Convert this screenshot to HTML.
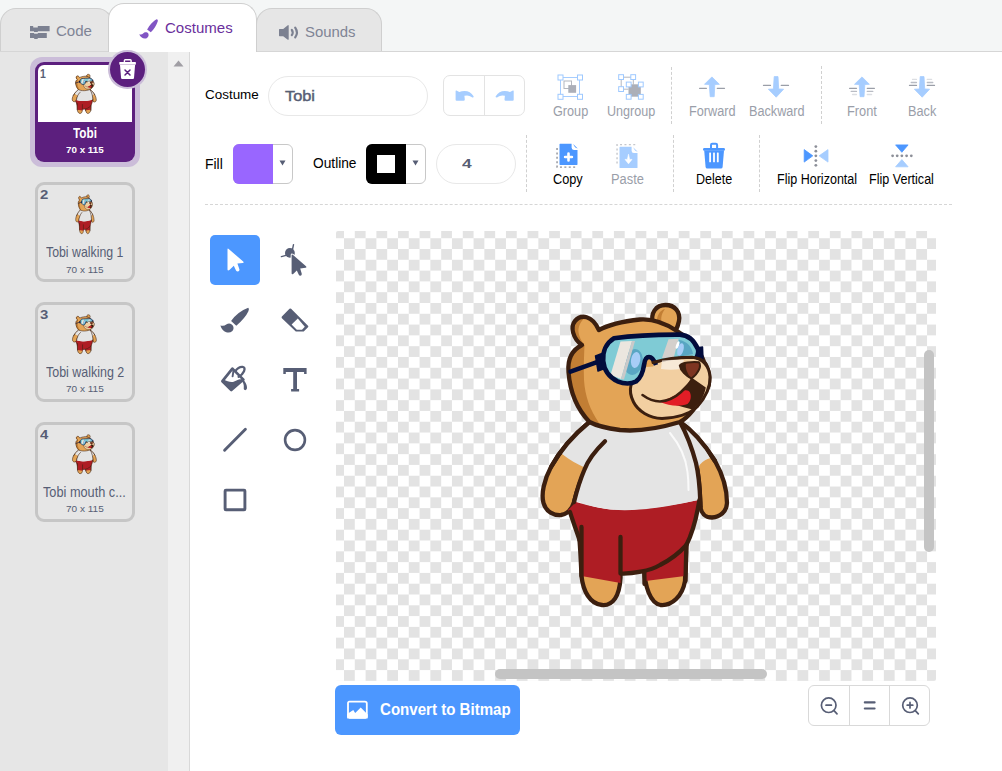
<!DOCTYPE html>
<html><head><meta charset="utf-8">
<style>
*{box-sizing:border-box;margin:0;padding:0}
html,body{width:1002px;height:771px;overflow:hidden;background:#fff;font-family:"Liberation Sans",sans-serif}
.a{position:absolute}
.t{position:absolute;white-space:pre;transform-origin:0 0}
.tab{position:absolute;background:#e6e6e6;border:1px solid #cfcfcf;border-bottom:none;border-radius:16px 16px 0 0}
.dv{position:absolute;width:1px;border-left:1px dashed #d0d0d0}
svg{position:absolute;overflow:visible}
</style></head><body>
<div class="a" style="left:0;top:0;width:1002px;height:52px;background:#f4f6f6"></div>
<!-- tabs -->
<div class="tab" style="left:0;top:8px;width:113px;height:44px"></div>
<div class="tab" style="left:256px;top:8px;width:126px;height:44px"></div>
<div class="a" style="left:0;top:51px;width:1002px;height:1px;background:#d6d6d6"></div>
<div class="tab" style="left:108px;top:3px;width:149px;height:49px;background:#fff"></div>

<div class="a" style="left:0;top:52px;width:168px;height:719px;background:#e6e6e6"></div>
<div class="a" style="left:168px;top:52px;width:21px;height:719px;background:#f0f0f0"></div>
<div class="a" style="left:189px;top:52px;width:1px;height:719px;background:#d9d9d9"></div>
<svg style="left:173px;top:60px" width="11" height="7"><path d="M0.5 6.5L5.5 0.5L10.5 6.5Z" fill="#a09ea4"/></svg>

<!-- costume cards -->
<div class="a" style="left:30px;top:57px;width:110px;height:110px;border-radius:12px;background:#cbbdd9"></div>
<div class="a" style="left:35px;top:62px;width:100px;height:100px;border-radius:9px;background:#5c1f7e"></div>
<div class="a" style="left:38px;top:65px;width:94px;height:57px;background:#fff;border-radius:6px 6px 0 0"></div>
<div class="a" style="left:108.4px;top:50.2px;width:38.4px;height:38.4px;border-radius:50%;background:#cbbdd9"></div>
<div class="a" style="left:110.1px;top:51.9px;width:35px;height:35px;border-radius:50%;background:#5c1f7e"></div>

<div class="a" style="left:35px;top:182px;width:100px;height:100px;border-radius:9px;border:3px solid #c6c6c6"></div>
<div class="a" style="left:35px;top:302px;width:100px;height:100px;border-radius:9px;border:3px solid #c6c6c6"></div>
<div class="a" style="left:35px;top:422px;width:100px;height:100px;border-radius:9px;border:3px solid #c6c6c6"></div>

<svg style="left:0;top:0" width="1002" height="771" viewBox="0 0 1002 771">
<use href="#bear" transform="translate(1.4 34.5) scale(0.1305)"/>
<use href="#bear" transform="translate(21.4 155.3) scale(0.1 0.1295)"/>
<use href="#bear" transform="translate(2.2 275.3) scale(0.1295)"/>
<use href="#bear" transform="translate(2.2 395.3) scale(0.1295)"/>
</svg>

<!-- toolbar row 1 -->
<div class="a" style="left:268px;top:76px;width:160px;height:40px;border:1px solid #e8e8e8;border-radius:20px"></div>
<div class="a" style="left:443px;top:75px;width:82px;height:41px;border:1px solid #e3e3e3;border-radius:7px"></div>
<div class="a" style="left:484px;top:76px;width:1px;height:39px;background:#e3e3e3"></div>
<div class="dv" style="left:671px;top:67px;height:57px"></div>
<div class="dv" style="left:821px;top:66px;height:58px"></div>

<!-- toolbar row 2 -->
<div class="a" style="left:233px;top:144px;width:60px;height:40px;border:1px solid #c8c8c8;border-radius:6px"></div><div class="a" style="left:233px;top:144px;width:40px;height:40px;border-radius:6px 0 0 6px;background:#9966ff"></div>
<svg style="left:279px;top:160px" width="7" height="6"><path d="M0.5 0.5H6.5L3.5 5.5Z" fill="#575e75"/></svg>
<div class="a" style="left:366px;top:144px;width:60px;height:40px;border:1px solid #c8c8c8;border-radius:6px"></div><div class="a" style="left:366px;top:144px;width:40px;height:40px;border-radius:6px 0 0 6px;background:#000"></div><div class="a" style="left:377px;top:155px;width:18px;height:18px;background:#fff"></div>
<svg style="left:412px;top:160px" width="7" height="6"><path d="M0.5 0.5H6.5L3.5 5.5Z" fill="#575e75"/></svg>
<div class="a" style="left:436px;top:144px;width:80px;height:40px;border:1px solid #e8e8e8;border-radius:20px"></div>
<div class="dv" style="left:526px;top:135px;height:57px"></div>
<div class="dv" style="left:673px;top:135px;height:57px"></div>
<div class="dv" style="left:759px;top:135px;height:57px"></div>

<div class="a" style="left:205px;top:204px;width:747px;height:1px;border-top:1px dashed #d6d6d6"></div>

<!-- tools -->
<div class="a" style="left:210px;top:235px;width:50px;height:50px;border-radius:5px;background:#4c97ff"></div>

<!-- canvas -->
<div class="a" style="left:336px;top:231px;width:600px;height:450px;border-radius:2px;overflow:hidden;background-color:#fff;background-image:conic-gradient(#fff 0 25%,#e3e3e3 0 50%,#fff 0 75%,#e3e3e3 0);background-size:21.6px 21.6px;background-position:-2.8px -3.6px"></div>
<svg style="left:0;top:0" width="1002" height="771" viewBox="0 0 1002 771">
<g id="bear">
<g stroke="#3c1f0f" stroke-width="4.3" stroke-linejoin="round" stroke-linecap="round">
<!-- right ear -->
<path d="M653 324C650 313 656 305 665.5 305C675 305 680.5 312 679 321C678 326 676.5 329 675.5 331Z" fill="#e3a456"/>
<!-- legs -->
<path d="M579.5 540C580.5 552 581 565 581.5 576C583 591 590 604 602 605C613 606 619.5 596 620.5 578L620.5 537Z" fill="#e3a456"/>
<path d="M644.3 570C645 586 650 603 660.5 605C672 606 682.5 596 685 581L686.4 544Z" fill="#e3a456"/>
<!-- arms -->
<path d="M589.5 422C576 433 561 449 551 467C544 480 541 494 543.5 503C546 512 554 515.5 561 515C568 514 572 509 574 502C577 490 580 480 586 469C592 458 598 449 605 441.3Z" fill="#e3a456"/>
<path d="M680 422C692 430 705 445 715 461C723 475 727 490 727 503C726.5 512 720 517 712 517.5C705 517.5 701 513 700.5 507C700 495 700 480 696 463C692 448 686 433 680 422Z" fill="#e3a456"/>
</g>
<!-- shorts -->
<path d="M568 510C572 525 577 533 579.5 540L581.5 576L620.5 583L620.5 573.5C632 574 650 571 660 566L644.5 573L645.5 581L685 576L686.4 545C694 533 698 515 699.4 499.7C670 506 640 510 620 510C605 510 590 506 576 502Z" fill="#ae1d24"/>
<!-- shirt -->
<path d="M589.5 422C576 433 566 444 562 454C570 460 577 464 583.5 467C590 457 597 448 605 441.3C596 452 588 461 584.3 470C580 480 577 490 575.5 501C590 506 605 510 624.8 510.3C650 510 675 505 699.4 499.7C700 490 700 478 699 470C698 466 700.5 464 700.5 464C703 461 707 459 710 458.3C705 447 694 433 680 422C660 428 640 432 620 430C605 428 595 425 589.5 422Z" fill="#e4e4e4"/>
<path d="M670 433C680 445 686 458 687.5 472C688.5 480 688.5 487 688.5 490" fill="none" stroke="#fafafa" stroke-width="2" stroke-linecap="round"/>
<g fill="none" stroke="#3c1f0f" stroke-width="4.3" stroke-linejoin="round" stroke-linecap="round">
<path d="M589.5 422C576 433 561 449 551 467"/>
<path d="M605 441.3C596 450 588 460 584.3 470C580 480 577 490 574 502"/>
<path d="M680 422C692 430 705 445 715 461"/>
<path d="M680 422C686 433 692 448 696 463C700 480 700 495 700.5 507"/>
<!-- hip/shorts outline -->
<path d="M570 512C573 522 577 532 579.5 540"/>
<path d="M581.5 527L581.5 576"/>
<path d="M620.5 537L620.5 573.5C632 574 650 571 660 565C672 559 681 551 686.4 545C693 532 697 515 699.4 500"/>
<path d="M686.4 545L685.5 581"/>
<path d="M644.3 572L644.5 584"/>
</g>
<!-- head -->
<path d="M589.5 422C578 410 570 392 568.5 372C567.5 360 572 350 582 345C573 339 570 327 575 321C581 314 592 315 598.9 330C608 325 622 321.5 640 319.5C655 318.5 668 325 677 331C690 339 700 350 704 362C711 372 711 385 705 392C698 405 688 418 680 422C660 428 640 432 620 430C605 428 595 425 589.5 422Z" fill="#e3a456"/>
<path d="M585 318C580.5 321 578 327 578.5 332C579 337 581.5 341 584.5 345C584 357 583.5 368 584 380C585 396 590 410 599 423L589.5 422C578 410 570 395 568.5 375C568.5 362 573 352 582 345C578 343 574 338 573 331C572 323 578 317 585 318Z" fill="#c27e34"/>
<path d="M657 324C656 316 660 310 665 309C661 314 660 320 663 326Z" fill="#c27e34"/>
<path d="M589.5 422C578 410 570 392 568.5 372C567.5 360 572 350 582 345C573 339 570 327 575 321C581 314 592 315 598.9 330C608 325 622 321.5 640 319.5C655 318.5 668 325 677 331C690 339 700 350 704 362C711 372 711 385 705 392C698 405 688 418 680 422C660 428 640 432 620 430C605 428 595 425 589.5 422Z" fill="none" stroke="#3c1f0f" stroke-width="4.3" stroke-linejoin="round"/>
<!-- goggle strap -->
<path d="M570.5 371.6L597 362.2" stroke="#020c3c" stroke-width="4.6" stroke-linecap="round"/>
<path d="M595.5 356L602 353.5L604.5 368.5L598 371Z" fill="#020c3c" stroke="#020c3c" stroke-width="1.5" stroke-linejoin="round"/>
<path d="M696.5 348L702.5 347L703 359.5L697 360Z" fill="#020c3c" stroke="#020c3c" stroke-width="1.5" stroke-linejoin="round"/>
<!-- muzzle -->
<path d="M646.3 364.5C660 360 676 357.3 692 357.3C702 358 709.5 366 710 377C710.5 388 705 398 697 407C688 415 676 418 662 418.5C649 418 638 411 633.5 402C630 395 630 389 631 385C635 377 640 370 646.3 364.5Z" fill="#f2cfa1" stroke="#3c1f0f" stroke-width="3" stroke-linejoin="round"/>
<!-- mouth -->
<path d="M691.5 377.5L705.8 387.5C704 397 699 405 692.5 409.5C686 408 680 406 672 404L664 401.5C672 398 678 394 682 390C686 386 689 382 691.5 377.5Z" fill="#3c1f0f"/>
<path d="M659.5 401.8C666 399.5 674 396.5 681 392C685 389.5 688.5 390 690 392.5C691.5 396 691 401 687.5 404C680 406.8 670 406.3 659.5 401.8Z" fill="#e21d26"/>
<path d="M642.5 395C648 399 654 401.5 660 401.5C668 401 675 397.5 681 392C685 388 688 385 690 383" fill="none" stroke="#3c1f0f" stroke-width="2.6" stroke-linecap="round"/>
<!-- goggle frame -->
<path d="M614 338.2C630 336 660 334.5 679.8 334.6C688 335 694 340 697.8 349C699 354 697 357 692 357.3C680 357.3 668 359 656 362C654 358 652 357 649 357C645.5 357 644.5 361 644 365C643 372 641 378 636 381.5C631 384 624 384 617.5 381.3C609 377 604 370 603.2 361C602.5 352 606 343 614 338.2Z" fill="#7fcbd5"/>
<path d="M649 360C651 360 652.5 362.5 653.5 366.5L646 367C646 362.5 647 360 649 360Z" fill="#e3a456"/>
<ellipse cx="633.5" cy="362" rx="9.3" ry="13" transform="rotate(12 633.5 362)" fill="#59a6c3"/>
<ellipse cx="635.6" cy="360" rx="4.6" ry="8" transform="rotate(10 635.6 360)" fill="#a7cdf7"/>
<path d="M620.5 341.5L632 341L621 379L610.5 375Z" fill="#ebe6df"/>
<path d="M632 341L635 341L624 379.5L621 379Z" fill="#c9c9c9"/>
<path d="M679 340C687 341 692 347 693 354L678 357Z" fill="#59a6c3"/>
<path d="M668.5 339.2L678.6 338.8L673.8 357.5L662 358Z" fill="#d4d0cc"/>
<ellipse cx="680.5" cy="349.5" rx="3" ry="6.5" transform="rotate(15 680.5 349.5)" fill="#a7cdf7"/>
<ellipse cx="677.6" cy="345" rx="1.4" ry="4" transform="rotate(20 677.6 345)" fill="#fff"/>
<path d="M696 359C698 355 699 352 697.8 349C694 340 688 335 679.8 334.6C660 334.5 630 336 614 338.2C606 343 602.5 352 603.2 361C604 370 609 377 617.5 381.3C624 384 631 384 636 381.5C641 378 643 372 644 365C644.5 361 645.5 357 649 357C652 357 654 360 656 365" fill="none" stroke="#020c3c" stroke-width="4.6" stroke-linejoin="round"/>
<!-- muzzle top edge over goggles -->
<path d="M653 362.5C663 359.5 677 357.3 692 357.3C698 357.6 703 360 706 364" fill="none" stroke="#3c1f0f" stroke-width="3" stroke-linecap="round"/>
<path d="M662 360.5C670 359.5 678 359.5 684 360L681 369C674 370 667 370 661 369Z" fill="#f8f1ea" opacity="0.75"/>
<!-- nose -->
<path d="M679.8 365.5C682 362.5 692 361.5 699 362.2C701.5 366 699 373 691.5 378.5C686 376 680.5 370.5 679.8 365.5Z" fill="#7e3521" stroke="#3c1f0f" stroke-width="2" stroke-linejoin="round"/>
<path d="M680.5 365C680.5 371 685 376 691.5 379C687 373 685 368 686 363Z" fill="#3c1f0f"/>
</g>
</svg>

<div class="a" style="left:924px;top:350px;width:10px;height:202px;border-radius:5px;background:#c4c4c4"></div>
<div class="a" style="left:495px;top:669px;width:272px;height:10px;border-radius:5px;background:#c4c4c4"></div>

<!-- bottom buttons -->
<div class="a" style="left:335px;top:685px;width:185px;height:50px;border-radius:6px;background:#4c97ff"></div>
<div class="a" style="left:808px;top:685px;width:122px;height:41px;border:1px solid #d9d9d9;border-radius:6px"></div>
<div class="a" style="left:849px;top:686px;width:1px;height:39px;background:#d9d9d9"></div>
<div class="a" style="left:889px;top:686px;width:1px;height:39px;background:#d9d9d9"></div>

<!-- tab icons -->
<svg style="left:26px;top:20px" width="28" height="24"><g fill="#7c8191">
<path d="M4 6.1H7.2V7.5H11.8V6.1H23.6V11.2H11.8V12.1H8V11.2H4Z"/>
<path d="M4 13.1H8.1V13.8H11.8V13.1H20.8V17.9H11.7V19H8.2V17.9H4Z"/>
</g></svg>
<svg style="left:135px;top:15px" width="28" height="28"><g fill="#8155c4">
<path d="M21.6 4.2C22.8 4.3 23.1 5.3 22.7 6.6C21.6 10.2 18.8 14.7 15.8 17.2L12.1 14.6C14.2 10.7 18.3 5.6 21.6 4.2Z"/>
<path d="M4.2 19.3C5.6 19.8 7.2 19.6 8.1 18.5C9.4 16.7 12.3 16.6 13.3 18.6C14.2 20.4 13.3 22.8 11.2 23.4C8.4 24.2 5.3 22.4 4.2 19.3Z"/>
</g></svg>
<svg style="left:275px;top:20px" width="28" height="24"><g fill="#7c8191">
<path d="M4 9.6Q4 9 4.6 9H8.2L12.8 5.2Q13.7 4.8 13.7 6V19Q13.7 20.2 12.8 19.7L8.2 16.2H4.6Q4 16.2 4 15.6Z"/>
</g><g fill="none" stroke="#7c8191" stroke-width="2.2" stroke-linecap="round">
<path d="M16.8 9.9Q18.6 12.5 16.8 15.2"/>
<path d="M20.2 7.6Q23.6 12.5 20.2 17.4"/>
</g></svg>

<!-- card delete trash -->
<svg style="left:106px;top:48px" width="44" height="44">
<rect x="13.3" y="14" width="16.6" height="2.7" rx="0.6" fill="#fff"/>
<path d="M18.4 14.2V12.6Q18.4 11.8 19.2 11.8H24.3Q25.1 11.8 25.1 12.6V14.2" fill="none" stroke="#fff" stroke-width="1.4"/>
<path d="M14 17.1H29.1L28 30.1Q27.9 31.1 26.9 31.1H16.1Q15.2 31.1 15.1 30.1Z" fill="#fff"/>
<path d="M19 22L24 27M24 22L19 27" stroke="#5c1f7e" stroke-width="1.5" stroke-linecap="round"/>
</svg>

<!-- undo / redo -->
<svg style="left:450px;top:82px" width="30" height="26"><path fill="#a6cdff" d="M5.6 9Q5.6 8.2 6.4 8.5L9.3 10Q11.6 9.1 14.6 9.1Q20.3 9.1 23.6 14.3Q24 15.6 22.6 15.6Q22.1 15.6 21.6 15Q18.6 12.6 14.4 13.8L14.8 17.5Q14.8 18.7 13.6 18.7H6.6Q5.6 18.7 5.6 17.7Z"/></svg>
<svg style="left:489px;top:82px" width="30" height="26"><path transform="translate(30.3 0) scale(-1 1)" fill="#a6cdff" d="M5.6 9Q5.6 8.2 6.4 8.5L9.3 10Q11.6 9.1 14.6 9.1Q20.3 9.1 23.6 14.3Q24 15.6 22.6 15.6Q22.1 15.6 21.6 15Q18.6 12.6 14.4 13.8L14.8 17.5Q14.8 18.7 13.6 18.7H6.6Q5.6 18.7 5.6 17.7Z"/></svg>

<!-- group -->
<svg style="left:557px;top:74px" width="26" height="26">
<rect x="3.5" y="3.5" width="19" height="19" fill="none" stroke="#a6cdff" stroke-width="1"/>
<rect x="7" y="7" width="7.5" height="7.5" fill="none" stroke="#b4b7bf" stroke-width="1"/>
<rect x="11.3" y="11.1" width="7.8" height="7.7" fill="#acafb8"/>
<g fill="#fff" stroke="#9ec9ff" stroke-width="1">
<rect x="1" y="1" width="5" height="5"/><rect x="20.5" y="1" width="5" height="5"/>
<rect x="1" y="20.3" width="5" height="5"/><rect x="20.5" y="20.3" width="5" height="5"/>
</g></svg>
<!-- ungroup -->
<svg style="left:612px;top:70px" width="34" height="32">
<path d="M9.2 7.2H21.3V14.5M9.2 7.2V19.2H16.5" fill="none" stroke="#b4b7bf" stroke-width="1"/>
<rect x="16.5" y="14.3" width="12.3" height="12.4" fill="#acafb8"/>
<g fill="#fff" stroke="#9ec9ff" stroke-width="1">
<rect x="6.7" y="4.7" width="4.8" height="4.8"/><rect x="18.8" y="4.7" width="4.8" height="4.8"/>
<rect x="6.7" y="16.7" width="4.8" height="4.8"/>
<rect x="14.3" y="12.1" width="4.8" height="4.8"/><rect x="26.4" y="12.1" width="4.8" height="4.8"/>
<rect x="14.3" y="24.4" width="4.8" height="4.8"/><rect x="26.4" y="24.4" width="4.8" height="4.8"/>
</g></svg>
<!-- forward -->
<svg style="left:695px;top:72px" width="35" height="28">
<path d="M16.9 4.9L24.4 12.3L19.8 12.5L19.2 24.7L15.2 24.7L14.3 12.5L9.5 12.3Z" fill="#a6cdff" stroke="#a6cdff" stroke-width="0.8" stroke-linejoin="round"/>
<path d="M4.6 16.3H11.4M22.3 16.3H29.5" stroke="#9a9ea8" stroke-width="1.3" stroke-linecap="round"/>
</svg>
<!-- backward -->
<svg style="left:758px;top:72px" width="35" height="28">
<path d="M16.2 4.6L20 4.6L20.7 17L25.6 17.2L18.2 25.2L10.4 17.2L15.4 17Z" fill="#a6cdff" stroke="#a6cdff" stroke-width="0.8" stroke-linejoin="round"/>
<path d="M5.5 13.4H12.5M23.3 13.4H30.5" stroke="#9a9ea8" stroke-width="1.3" stroke-linecap="round"/>
</svg>
<!-- front -->
<svg style="left:844px;top:72px" width="35" height="28">
<path d="M18 4.9L25.4 12.3L20.8 12.5L20 24.7L16.1 24.7L15.2 12.5L10.5 12.3Z" fill="#a6cdff" stroke="#a6cdff" stroke-width="0.8" stroke-linejoin="round"/>
<path d="M5.6 16.3H12.5M23.3 16.3H30.4" stroke="#9a9ea8" stroke-width="1.3" stroke-linecap="round"/>
<path d="M7.2 19.4H12.5M23.3 19.4H28.8" stroke="#b9bcc4" stroke-width="1.3" stroke-linecap="round"/>
<path d="M8.5 22.5H12.5M23.3 22.5H27.6" stroke="#dcdee2" stroke-width="1.3" stroke-linecap="round"/>
</svg>
<!-- back -->
<svg style="left:904px;top:72px" width="35" height="28">
<path d="M16.2 4.6L20 4.6L20.7 17L25.6 17.2L18.2 25.2L10.4 17.2L15.4 17Z" fill="#a6cdff" stroke="#a6cdff" stroke-width="0.8" stroke-linejoin="round"/>
<path d="M5.5 13.4H12.5M23.3 13.4H30.5" stroke="#9a9ea8" stroke-width="1.3" stroke-linecap="round"/>
<path d="M7.2 10.5H12.5M23.3 10.5H28.8" stroke="#b9bcc4" stroke-width="1.3" stroke-linecap="round"/>
<path d="M8.5 7.4H12.5M23.3 7.4H27.6" stroke="#dcdee2" stroke-width="1.3" stroke-linecap="round"/>
</svg>

<!-- copy -->
<svg style="left:550px;top:138px" width="35" height="34">
<path d="M9.5 6.3Q9.5 5.7 10.1 5.7H21.6V9.6Q21.6 11.9 23.9 11.9H27.5V26.3Q27.5 26.9 26.9 26.9H10.1Q9.5 26.9 9.5 26.3Z" fill="#4c97ff"/>
<path d="M23.2 6.1L27.7 10.6Q24.8 10.2 23.2 6.1Z" fill="#4c97ff"/>
<path d="M18.5 15.6V22.4M15.1 19H21.9" stroke="#fff" stroke-width="2.6" stroke-linecap="round"/>
<path d="M7.05 10V29.1H26.4" fill="none" stroke="#8d9098" stroke-width="1.4" stroke-dasharray="2 2.4"/>
</svg>
<!-- paste -->
<svg style="left:610px;top:138px" width="35" height="34">
<path d="M9.5 9.4Q9.5 8.8 10.1 8.8H21.6V12.7Q21.6 15 23.9 15H27.5V29.4Q27.5 30 26.9 30H10.1Q9.5 30 9.5 29.4Z" fill="#a6cdff"/>
<path d="M23.2 9.2L27.7 13.7Q24.8 13.3 23.2 9.2Z" fill="#a6cdff"/>
<path d="M18.5 16.2L19.6 21.4H22L18.5 25.8L15 21.4H17.4Z" fill="#fff" stroke="#fff" stroke-width="0.6" stroke-linejoin="round"/>
<path d="M7.05 25.6V6.6H26.4" fill="none" stroke="#c5c7cc" stroke-width="1.4" stroke-dasharray="2 2.4"/>
</svg>
<!-- delete -->
<svg style="left:696px;top:138px" width="35" height="34">
<path d="M15 10.5V7Q15 5.7 16.3 5.7H19.8Q21.1 5.7 21.1 7V10.5" fill="none" stroke="#4c97ff" stroke-width="2"/>
<rect x="7.05" y="9.9" width="21.9" height="2.9" rx="1.2" fill="#4c97ff"/>
<path d="M8.2 12.5H28L26.6 28.9Q26.4 30.4 24.9 30.4H11.3Q9.8 30.4 9.6 28.9Z" fill="#4c97ff"/>
<g fill="#fff"><rect x="13.2" y="14.5" width="1.8" height="9.7" rx="0.5"/><rect x="17.1" y="14.5" width="1.8" height="9.7" rx="0.5"/><rect x="20.9" y="14.5" width="1.8" height="9.7" rx="0.5"/></g>
</svg>
<!-- flip h -->
<svg style="left:798px;top:138px" width="35" height="34">
<path d="M6.2 11.6L14.8 17.85L6.2 24.1Z" fill="#4c97ff" stroke="#4c97ff" stroke-width="0.8" stroke-linejoin="round"/>
<path d="M30 11.6L21.1 17.85L30 24.1Z" fill="#a6cdff" stroke="#a6cdff" stroke-width="0.8" stroke-linejoin="round"/>
<g fill="#8c8f98"><circle cx="17.85" cy="8.6" r="1.4"/><circle cx="17.85" cy="13.2" r="1.4"/><circle cx="17.85" cy="17.85" r="1.4"/><circle cx="17.85" cy="22.6" r="1.4"/><circle cx="17.85" cy="27.3" r="1.4"/></g>
</svg>
<!-- flip v -->
<svg style="left:884px;top:138px" width="35" height="34">
<path d="M11.6 6.9L24.1 6.9L17.85 14.3Z" fill="#4c97ff" stroke="#4c97ff" stroke-width="0.8" stroke-linejoin="round"/>
<path d="M17.85 21.6L24.1 28.8L11.6 28.8Z" fill="#a6cdff" stroke="#a6cdff" stroke-width="0.8" stroke-linejoin="round"/>
<g fill="#8c8f98"><circle cx="8.6" cy="17.85" r="1.4"/><circle cx="13.2" cy="17.85" r="1.4"/><circle cx="17.85" cy="17.85" r="1.4"/><circle cx="22.6" cy="17.85" r="1.4"/><circle cx="27.3" cy="17.85" r="1.4"/></g>
</svg>

<!-- tools -->
<svg style="left:215px;top:240px" width="40" height="40"><path fill="#fff" d="M12.5 9.4Q12.5 7.9 13.7 8.9L28.2 21.6Q29.3 22.8 27.8 23L22.4 23.6L24.4 29.2Q24.8 31.3 22.8 31.5Q21.6 31.5 21 30.4L18.8 25.8L14.4 30Q12.6 31.2 12.5 29.4Z"/></svg>
<svg style="left:275px;top:240px" width="40" height="40">
<path d="M6.4 16.6L11 15.3M17.6 9L18.5 4.6" stroke="#575e75" stroke-width="1.4" stroke-linecap="round"/>
<circle cx="14.9" cy="12.9" r="4.9" fill="#575e75"/>
<path d="M16.6 15.2Q16.6 13.8 17.8 14.8L31 26.3Q32 27.5 30.6 27.7L25.2 28.4L26.7 33.6Q27 35.5 25.4 35.7Q24.3 35.8 23.8 34.8L21.8 30.5L18.2 34Q16.6 35 16.6 33.3Z" fill="#575e75" stroke="#fff" stroke-width="1.8" paint-order="stroke" stroke-linejoin="round"/>
</svg>

<svg style="left:215px;top:300px" width="40" height="40"><g fill="#575e75">
<path d="M33.2 7.8Q34.6 8.6 33.4 11.2Q30.4 17.8 21.3 25.7L16.1 20.9Q23 11.6 33.2 7.8Z"/>
<path d="M5.4 25.4Q8.8 26.6 11.2 24.6Q14.8 21.9 17.8 25.4Q19.6 28.6 17.1 31.3Q14.8 33.2 11.2 32.2Q6.9 30.6 5.4 25.4Z"/>
</g></svg>
<svg style="left:275px;top:300px" width="40" height="40">
<path d="M6.9 16.6L14.5 8.8Q15.3 8 16.1 8.8L33 25.7Q33.8 26.5 33 27.3L28.7 31.6H20.8L6.9 18.2Q6.2 17.4 6.9 16.6Z" fill="#575e75"/>
<path d="M22.8 18.4L16.6 24.6L21.8 29.8H27L29.8 26.8Z" fill="#fff"/>
</svg>

<svg style="left:215px;top:360px" width="40" height="40">
<path d="M17.4 8.6L28.4 19.6L16.3 30.1L7.4 21.2Z" fill="none" stroke="#575e75" stroke-width="2.7" stroke-linejoin="round"/>
<path d="M8.6 19.6C12 21.3 15 22.4 18 21.9C20.5 21.3 22.5 20 24.8 19.3L28.6 19.6L16.3 30.4L7 21.2Z" fill="#575e75"/>
<path d="M27 18.5C30 21 32.2 25 32 28C31.8 29.6 30.8 30.3 29.9 30.1C28.9 29.8 28.6 28.8 28.8 27.4C29 24.6 28 22.2 26.4 20.6Z" fill="#575e75"/>
<path d="M20.4 11C22 8.6 25 6.6 27.6 6.8C29.6 7 30 8.8 29 11.2C28 13.5 26 15.6 23.6 16.8" fill="none" stroke="#575e75" stroke-width="2.3" stroke-linecap="round"/>
<path d="M18.4 11.4L17.6 16.4" stroke="#575e75" stroke-width="1.9" stroke-linecap="round"/>
</svg>
<svg style="left:275px;top:360px" width="40" height="40"><path fill="#575e75" d="M8.3 8H31.6V14H29.1V11.9H22V29H24.1V31.6H16.1V29H18.2V11.9H10.8V14H8.3Z"/></svg>

<svg style="left:215px;top:420px" width="40" height="40"><path d="M9.6 30.2L30.4 9.3" stroke="#575e75" stroke-width="2.9" stroke-linecap="round"/></svg>
<svg style="left:275px;top:420px" width="40" height="40"><circle cx="20" cy="20" r="9.9" fill="none" stroke="#575e75" stroke-width="2.6"/></svg>
<svg style="left:215px;top:480px" width="40" height="40"><rect x="10.1" y="10.1" width="19.8" height="19.7" rx="0.8" fill="none" stroke="#575e75" stroke-width="2.9"/></svg>

<!-- bitmap icon -->
<svg style="left:342px;top:695px" width="30" height="30">
<path d="M7.4 6.7H22.9Q24.8 6.7 24.8 8.6V22.7H6V8.1Q6 6.7 7.4 6.7Z" fill="none" stroke="#fff" stroke-width="1.8" stroke-linejoin="round"/>
<path d="M5.1 19L11.3 15L13.2 17.9L18.7 12.5L23.7 17.6L25.7 19.5V22.3L23.5 23.8H7.3L5.1 21.7Z" fill="#fff"/>
</svg>

<!-- zoom icons -->
<svg style="left:815px;top:692px" width="110" height="28">
<g fill="none" stroke="#575e75" stroke-width="1.7" stroke-linecap="round">
<circle cx="13.7" cy="13.2" r="7.3"/><path d="M19 18.6L22 21.8M11 13.2H16.4"/>
<circle cx="95" cy="13.2" r="7.3"/><path d="M100.3 18.6L103.3 21.8M92.2 13.2H97.8M95 10.4V16"/>
</g>
<path d="M49.8 10.4H59.6M49.8 16.5H59.6" stroke="#575e75" stroke-width="2.1" stroke-linecap="round"/>
</svg>

<div class="t" style="left:56.30px;top:24.35px;font-size:14.71px;line-height:14.71px;font-weight:400;color:#7f8495;transform:scaleX(1.024)">Code</div>
<div class="t" style="left:164.70px;top:21.25px;font-size:14.71px;line-height:14.71px;font-weight:400;color:#6a2f9c;transform:scaleX(1.023)">Costumes</div>
<div class="t" style="left:304.80px;top:24.55px;font-size:14.71px;line-height:14.71px;font-weight:400;color:#7f8495;transform:scaleX(1.014)">Sounds</div>
<div class="t" style="left:204.86px;top:88.33px;font-size:13.43px;line-height:13.43px;font-weight:400;color:#000;transform:scaleX(1.001)">Costume</div>
<div class="t" style="left:285.15px;top:88.75px;font-size:14.71px;line-height:14.71px;font-weight:400;color:#575e75;transform:scaleX(1.112);-webkit-text-stroke:0.45px #575e75">Tobi</div>
<div class="t" style="left:552.99px;top:104.15px;font-size:14.0px;line-height:14.0px;font-weight:400;color:#9a9ea9;transform:scaleX(0.905)">Group</div>
<div class="t" style="left:607.00px;top:104.15px;font-size:14.0px;line-height:14.0px;font-weight:400;color:#9a9ea9;transform:scaleX(0.898)">Ungroup</div>
<div class="t" style="left:689.19px;top:104.15px;font-size:14.0px;line-height:14.0px;font-weight:400;color:#9a9ea9;transform:scaleX(0.908)">Forward</div>
<div class="t" style="left:748.59px;top:104.15px;font-size:14.0px;line-height:14.0px;font-weight:400;color:#9a9ea9;transform:scaleX(0.905)">Backward</div>
<div class="t" style="left:846.59px;top:104.15px;font-size:14.0px;line-height:14.0px;font-weight:400;color:#9a9ea9;transform:scaleX(0.915)">Front</div>
<div class="t" style="left:907.69px;top:104.15px;font-size:14.0px;line-height:14.0px;font-weight:400;color:#9a9ea9;transform:scaleX(0.910)">Back</div>
<div class="t" style="left:205.04px;top:156.63px;font-size:14.14px;line-height:14.14px;font-weight:400;color:#000;transform:scaleX(0.987)">Fill</div>
<div class="t" style="left:313.05px;top:157.39px;font-size:13.71px;line-height:13.71px;font-weight:400;color:#000;transform:scaleX(1.002)">Outline</div>
<div class="t" style="left:461.80px;top:157.94px;font-size:12.71px;line-height:12.71px;font-weight:700;color:#575e75;transform:scaleX(1.369)">4</div>
<div class="t" style="left:552.69px;top:172.15px;font-size:14.0px;line-height:14.0px;font-weight:400;color:#000;transform:scaleX(0.909)">Copy</div>
<div class="t" style="left:611.09px;top:172.15px;font-size:14.0px;line-height:14.0px;font-weight:400;color:#9a9ea9;transform:scaleX(0.920)">Paste</div>
<div class="t" style="left:695.70px;top:172.15px;font-size:14.0px;line-height:14.0px;font-weight:400;color:#000;transform:scaleX(0.895)">Delete</div>
<div class="t" style="left:776.60px;top:172.25px;font-size:14.0px;line-height:14.0px;font-weight:400;color:#000;transform:scaleX(0.895)">Flip Horizontal</div>
<div class="t" style="left:869.30px;top:172.25px;font-size:14.0px;line-height:14.0px;font-weight:400;color:#000;transform:scaleX(0.897)">Flip Vertical</div>
<div class="t" style="left:379.80px;top:701.60px;font-size:15.71px;line-height:15.71px;font-weight:700;color:#fff;transform:scaleX(0.960)">Convert to Bitmap</div>
<div class="t" style="left:72.83px;top:126.57px;font-size:13.86px;line-height:13.86px;font-weight:700;color:#fff;transform:scaleX(0.848)">Tobi</div>
<div class="t" style="left:65.91px;top:144.82px;font-size:9.43px;line-height:9.43px;font-weight:700;color:#fff;transform:scaleX(1.042)">70 x 115</div>
<div class="t" style="left:45.61px;top:246.07px;font-size:13.86px;line-height:13.86px;font-weight:400;color:#575e75;transform:scaleX(0.889)">Tobi walking 1</div>
<div class="t" style="left:65.90px;top:264.58px;font-size:9.71px;line-height:9.71px;font-weight:400;color:#575e75;transform:scaleX(1.030)">70 x 115</div>
<div class="t" style="left:45.50px;top:366.27px;font-size:13.86px;line-height:13.86px;font-weight:400;color:#575e75;transform:scaleX(0.899)">Tobi walking 2</div>
<div class="t" style="left:66.00px;top:384.48px;font-size:9.71px;line-height:9.71px;font-weight:400;color:#575e75;transform:scaleX(1.035)">70 x 115</div>
<div class="t" style="left:42.99px;top:486.27px;font-size:13.86px;line-height:13.86px;font-weight:400;color:#575e75;transform:scaleX(0.919)">Tobi mouth c...</div>
<div class="t" style="left:66.00px;top:504.48px;font-size:9.71px;line-height:9.71px;font-weight:400;color:#575e75;transform:scaleX(1.035)">70 x 115</div>
<div class="t" style="left:40.18px;top:68.04px;font-size:12.71px;line-height:12.71px;font-weight:700;color:#575e75;transform:scaleX(0.825)">1</div>
<div class="t" style="left:39.50px;top:187.65px;font-size:13.29px;line-height:13.29px;font-weight:700;color:#575e75;transform:scaleX(1.122)">2</div>
<div class="t" style="left:39.50px;top:307.65px;font-size:13.29px;line-height:13.29px;font-weight:700;color:#575e75;transform:scaleX(1.122)">3</div>
<div class="t" style="left:39.50px;top:427.65px;font-size:13.29px;line-height:13.29px;font-weight:700;color:#575e75;transform:scaleX(1.122)">4</div>
</body></html>
